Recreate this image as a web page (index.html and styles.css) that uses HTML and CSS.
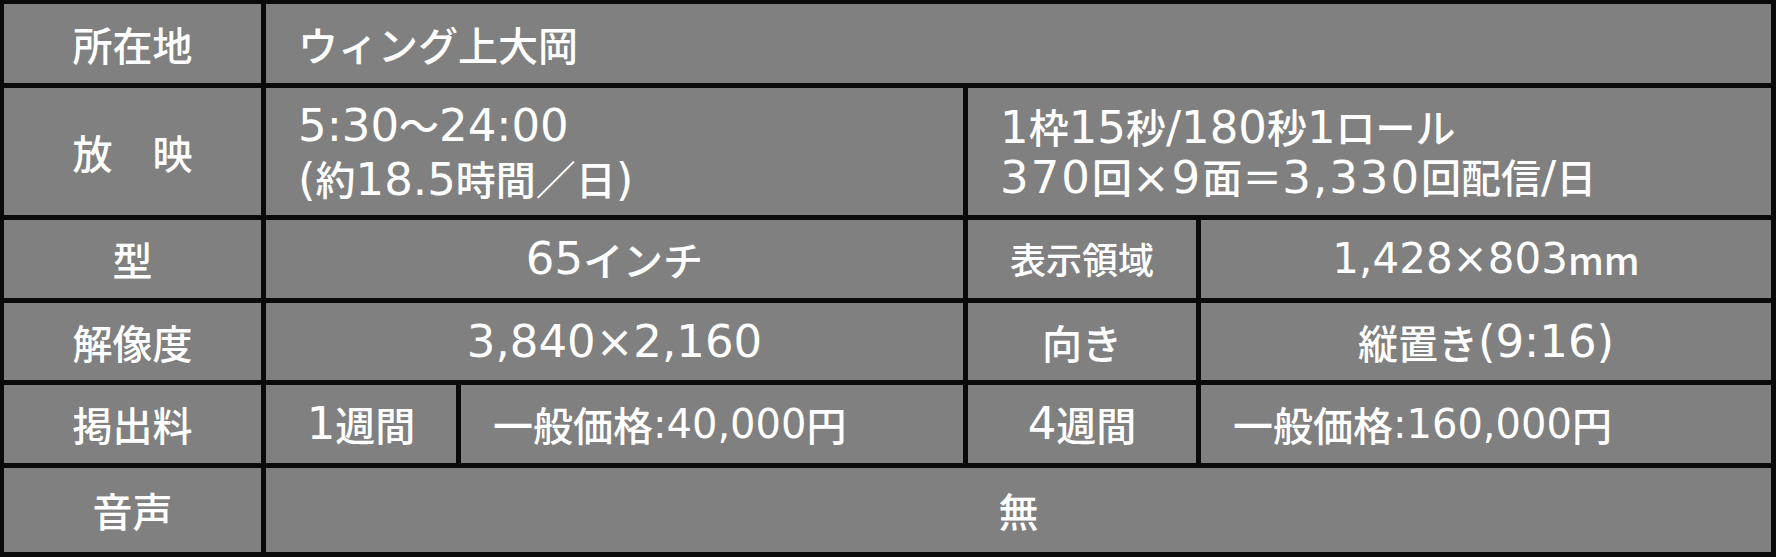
FILE: index.html
```html
<!DOCTYPE html>
<html lang="ja">
<head>
<meta charset="utf-8">
<title>ウィング上大岡</title>
<link rel="stylesheet" href="styles.css">
</head>
<body>
<div class="spec">
  <div class="cell head">所在地</div>
  <div class="cell left span-be">ウィング上大岡</div>

  <div class="cell head">放　映</div>
  <div class="cell left span-bc big">
    <div class="lines"><span class="n">5:30</span>～<span class="n">24:00</span><br><span class="n">(</span>約<span class="n">18.5</span>時間／日<span class="n">)</span></div>
  </div>
  <div class="cell left span-de big">
    <div class="lines tight"><span class="n">1</span>枠<span class="n">15</span>秒<span class="n">/180</span>秒<span class="n">1</span>ロール<br><span class="n wide">370</span>回<span class="n wide">×9</span>面＝<span class="n wide">3,330</span>回配信<span class="n">/</span>日</div>
  </div>

  <div class="cell head">型</div>
  <div class="cell center span-bc big"><span class="n">65</span>インチ</div>
  <div class="cell center small">表示領域</div>
  <div class="cell center area"><span class="n">1,428×803</span><span class="unit">mm</span></div>

  <div class="cell head">解像度</div>
  <div class="cell center span-bc big"><span class="n">3,840×2,160</span></div>
  <div class="cell center">向き</div>
  <div class="cell center big">縦置き<span class="n">(9:16)</span></div>

  <div class="cell head">掲出料</div>
  <div class="cell center big"><span class="n">1</span>週間</div>
  <div class="cell left">一般価格<span class="n">:40,000</span>円</div>
  <div class="cell center big"><span class="n">4</span>週間</div>
  <div class="cell left">一般価格<span class="n">:160,000</span>円</div>

  <div class="cell head">音声</div>
  <div class="cell center span-be">無</div>
</div>
</body>
</html>
```
FILE: styles.css
```css
html, body {
  margin: 0;
  padding: 0;
  background: #0a0a0a;
}

.spec {
  box-sizing: border-box;
  width: 1776px;
  height: 557px;
  padding: 4px 5px 5px 4px;
  background: #0a0a0a;
  display: grid;
  grid-template-columns: 257px 190px 502px 228px 1fr;
  grid-template-rows: 79px 127px 78px 77px 78px 1fr;
  gap: 5px;
  font-family: "Noto Sans CJK JP", "Noto Sans", sans-serif;
  font-weight: 500;
  font-size: 40px;
  color: #ffffff;
}

.cell {
  background: #808080;
  display: flex;
  align-items: center;
  line-height: 1.2;
  white-space: nowrap;
}

.head,
.center {
  justify-content: center;
}

.left {
  justify-content: flex-start;
  padding-left: 32px;
}

.span-be {
  grid-column: 2 / 6;
}

.span-bc {
  grid-column: 2 / 4;
}

.span-de {
  grid-column: 4 / 6;
}

.lines {
  line-height: 52px;
}

.lines.tight {
  line-height: 48px;
}

.small {
  font-size: 36px;
}

.n {
  font-family: "DejaVu Sans", "Noto Sans CJK JP", sans-serif;
  font-weight: 400;
}

.big .n {
  font-size: 45px;
}

.big .n.wide {
  letter-spacing: 2px;
}

.area .n {
  font-size: 42px;
}

.unit {
  font-size: 38px;
}
```
